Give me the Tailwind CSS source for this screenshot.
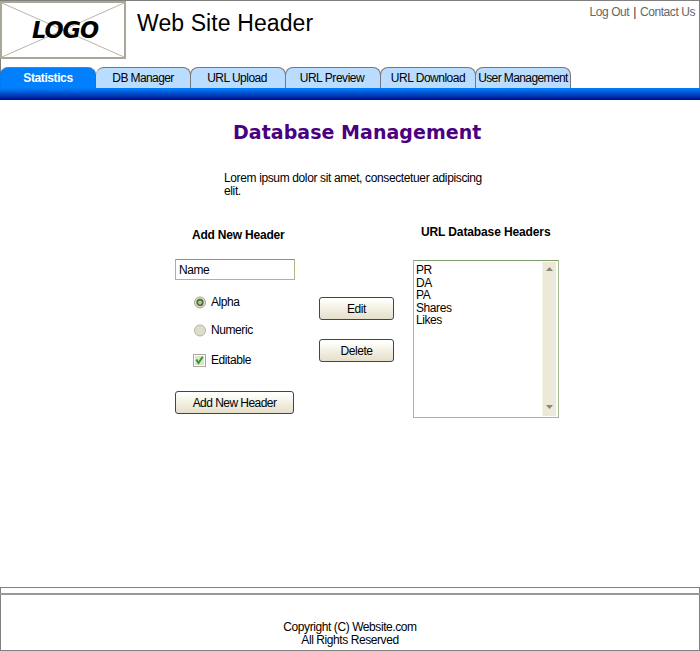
<!DOCTYPE html>
<html lang="en">
<head>
<meta charset="utf-8">
<title>Database Management</title>
<script src="https://cdn.jsdelivr.net/npm/@tailwindcss/browser@4"></script>
</head>
<body class="w-[700px] h-[651px] overflow-hidden bg-white flex flex-col text-black text-[12px] leading-[13px] tracking-[-0.42px] font-['Liberation_Sans',Arial,sans-serif] whitespace-nowrap">
<header class="h-[88px] shrink-0 border-t border-x border-[#808080] flex flex-col justify-between">
  <div class="flex h-[58px] -ml-px">
    <div class="w-[126px] h-[58px] relative shrink-0">
      <svg class="block" width="126" height="58" viewBox="0 0 126 58"><rect x="1" y="1" width="124" height="56" fill="#fff" stroke="#aca899" stroke-width="2"/><path d="M2 2L124 56M2 56L124 2" stroke="#b8b5a8" stroke-width="1"/></svg>
      <div class="absolute inset-0 pl-[4px] flex items-center justify-center font-['DejaVu_Sans',sans-serif] font-bold italic text-[22.5px] leading-[24px] tracking-[-1.1px]"><span>LOGO</span></div>
    </div>
    <h1 class="ml-[11px] mt-[8px] text-[23px] leading-[28px] tracking-[0.1px]"><span>Web Site Header</span></h1>
    <nav class="ml-auto mr-[4px] mt-[5px] flex text-[#666] tracking-[-0.43px]"><span>Log Out</span><span class="mx-[4px] text-[#333]">|</span><span>Contact Us</span></nav>
  </div>
  <nav class="flex h-[21px] -ml-px tracking-[-0.6px]">
    <div class="w-[96px] h-[21px] bg-[#0080ff] border border-b-0 border-[#0078f0] border-t-[#5f7f9f] rounded-t-[8px] flex items-center justify-center font-bold text-white tracking-[-0.4px]"><span>Statistics</span></div>
    <div class="w-[95px] h-[21px] bg-[#b9dcff] border-t border-r border-[#777] rounded-t-[8px] flex items-center justify-center"><span>DB Manager</span></div>
    <div class="w-[96px] -ml-px h-[21px] bg-[#b9dcff] border border-b-0 border-[#777] rounded-t-[8px] flex items-center justify-center pr-[2px] tracking-[-0.52px]"><span>URL Upload</span></div>
    <div class="w-[96px] -ml-px h-[21px] bg-[#b9dcff] border border-b-0 border-[#777] rounded-t-[8px] flex items-center justify-center pr-[2px] tracking-[-0.45px]"><span>URL Preview</span></div>
    <div class="w-[96px] -ml-px h-[21px] bg-[#b9dcff] border border-b-0 border-[#777] rounded-t-[8px] flex items-center justify-center tracking-[-0.5px]"><span>URL Download</span></div>
    <div class="w-[96px] -ml-px h-[21px] bg-[#b9dcff] border border-b-0 border-[#777] rounded-t-[8px] flex items-center justify-center"><span>User Management</span></div>
  </nav>
</header>
<div class="h-[12px] shrink-0 bg-linear-to-b from-[#0080ff] to-[#000090]"></div>
<main class="h-[487px] shrink-0">
  <h2 class="pt-[19px] ml-[233px] font-['DejaVu_Sans',Verdana,sans-serif] font-bold text-[19px] leading-[26px] tracking-[0.04px] text-[#4b0082]"><span>Database Management</span></h2>
  <p class="mt-[27px] ml-[224px] tracking-[-0.37px]"><span>Lorem ipsum dolor sit amet, consectetuer adipiscing</span><br><span>elit.</span></p>
  <div class="mt-[27px] ml-[175px] flex">
    <section class="w-[120px] mt-[4px]">
      <h3 class="ml-[17px] font-bold h-[13px] tracking-[-0.2px]"><span>Add New Header</span></h3>
      <div class="mt-[17px] w-[120px] h-[21px] border border-[#a5b98b] border-t-[#7f9d68] rounded-[1px] pl-[3px] pt-px flex items-center"><span>Name</span></div>
      <div class="mt-[15px] ml-[18px] flex items-center h-[14px] gap-[5px]">
        <svg width="13" height="13" viewBox="0 0 13 13"><circle cx="7" cy="6.5" r="5.5" fill="#dedbc7" stroke="#a9a793"/><circle cx="7" cy="6.5" r="2.8" fill="#b8c69c" stroke="#4c7035" stroke-width="1.7"/></svg><span>Alpha</span></div>
      <div class="mt-[14px] ml-[18px] flex items-center h-[14px] gap-[5px]">
        <svg width="13" height="13" viewBox="0 0 13 13"><circle cx="7" cy="6.5" r="5.5" fill="#dedcca" stroke="#b5b3a2"/></svg><span>Numeric</span></div>
      <div class="mt-[16px] ml-[18px] flex items-center h-[14px] gap-[5px]">
        <svg width="13" height="13" viewBox="0 0 13 13"><rect x=".5" y=".5" width="12" height="12" fill="#fff" stroke="#aca899"/><rect x="2" y="2" width="9" height="9" fill="#e2e0d2"/><path d="M3.3 5.5L5.5 9L9.7 2.8" fill="none" stroke="#21a121" stroke-width="2"/></svg><span>Editable</span></div>
      <button class="mt-[24px] w-[119px] h-[23px] border border-[#1c4d7c] rounded-[3px] bg-linear-to-b from-[#fffffb] from-10% via-[#f3f0e3] via-50% to-[#e5dfcb] flex items-center justify-center pt-[2px] tracking-[-0.55px]"><span>Add New Header</span></button>
    </section>
    <section class="ml-[24px] mt-[72px] w-[75px] flex flex-col gap-[19px]">
      <button class="w-[75px] h-[23px] border border-[#1c4d7c] rounded-[3px] bg-linear-to-b from-[#fffffb] from-10% via-[#f3f0e3] via-50% to-[#e5dfcb] flex items-center justify-center pt-[2px]"><span>Edit</span></button>
      <button class="w-[75px] h-[23px] border border-[#1c4d7c] rounded-[3px] bg-linear-to-b from-[#fffffb] from-10% via-[#f3f0e3] via-50% to-[#e5dfcb] flex items-center justify-center pt-[2px]"><span>Delete</span></button>
    </section>
    <section class="ml-[19px] w-[146px]">
      <h3 class="ml-[8px] mt-px font-bold h-[13px] tracking-[-0.12px]"><span>URL Database Headers</span></h3>
      <div class="mt-[21px] w-[146px] h-[158px] border border-[#a5b98b] border-t-[#7f9d68] rounded-[1px] flex justify-between">
        <ul class="pl-[2px] pt-[3px] leading-[12.6px]"><li>PR</li><li>DA</li><li>PA</li><li>Shares</li><li>Likes</li></ul>
        <div class="mt-px mr-[2px] w-[14px] h-[154px] bg-[#ece9d8] border-l border-[#f4f2e8] flex flex-col justify-between items-center pt-[5px] pb-[7px]">
          <svg width="7" height="4"><path d="M0 4L3.5 0L7 4z" fill="#8b8878"/></svg>
          <svg width="7" height="4"><path d="M0 0L3.5 4L7 0z" fill="#8b8878"/></svg>
        </div>
      </div>
    </section>
  </div>
</main>
<footer class="h-[64px] shrink-0 border border-[#808080]">
  <div class="mt-[5px] -mx-px h-[2px] bg-[#999]"></div>
  <div class="mt-[26px] text-center"><span>Copyright (C) Website.com</span><br><span>All Rights Reserved</span></div>
</footer>
</body>
</html>
